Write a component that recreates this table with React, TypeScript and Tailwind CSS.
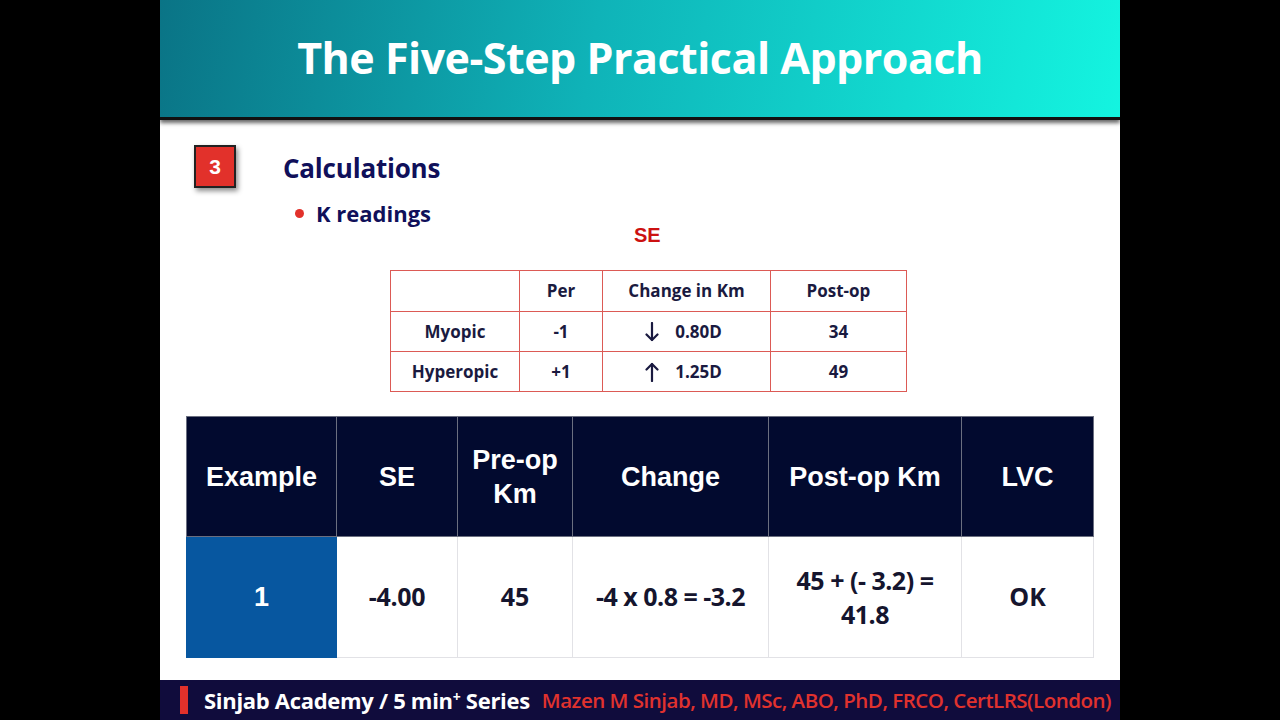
const cal = "font-['Open_Sans','Noto_Sans',sans-serif]";
const ari = "font-['Liberation_Sans',Arial,sans-serif]";

const kRows = [
  { label: "Myopic", per: "-1", up: false, change: "0.80D", post: "34" },
  { label: "Hyperopic", per: "+1", up: true, change: "1.25D", post: "49" },
];

const headers = [
  { text: "Example", w: "w-[150px]" },
  { text: "SE", w: "w-[121px]" },
  { text: "Pre-op Km", w: "w-[115px]" },
  { text: "Change", w: "w-[196px]" },
  { text: "Post-op Km", w: "w-[193px]" },
  { text: "LVC", w: "w-[132px]" },
];

function Arrow({ up }: { up: boolean }) {
  return (
    <svg width="14" height="20" viewBox="0 0 14 20" className={up ? "" : "rotate-180"} fill="none" stroke="#1a1a40" strokeWidth="2.2" strokeLinecap="round" strokeLinejoin="round">
      <path d="M7 19V2" />
      <path d="M1.5 7.5L7 2l5.5 5.5" />
    </svg>
  );
}

export default function App() {
  return (
    <div className="w-full h-[720px] bg-black flex justify-center overflow-hidden">
      <div className="w-[960px] h-full flex flex-col bg-white">
        {/* title bar */}
        <div className="h-[120px] shrink-0 bg-[linear-gradient(100deg,#0a7486_0%,#0fb3b8_45%,#14f4e0_100%)] flex items-center justify-center shadow-[0_3px_4px_rgba(0,0,0,0.6)] border-b-[3px] border-[#111]">
          <h1 className={`${cal} text-white font-bold text-[43px] tracking-[-0.5px]`}>The Five-Step Practical Approach</h1>
        </div>

        <div className="flex-1 flex flex-col">
          {/* heading */}
          <div className="flex items-start pl-[34px] pt-[25px]">
            <div className={`${ari} w-[42px] h-[43px] bg-[#e2312b] border-2 border-[#222] text-white font-bold text-[21px] flex items-center justify-center shadow-[2px_3px_5px_rgba(0,0,0,0.45)]`}>3</div>
            <div className="ml-[47px] pt-[6px]">
              <div className={`${cal} text-[#10105a] font-bold text-[26px] leading-[34px] tracking-[-0.2px]`}>Calculations</div>
              <div className="flex items-center mt-[14px] ml-[12px]">
                <span className="w-[9px] h-[9px] rounded-full bg-[#e2312b]"></span>
                <span className={`${cal} text-[#10105a] font-bold text-[22px] leading-[28px] ml-[12px]`}>K readings</span>
              </div>
            </div>
          </div>

          <div className={`${ari} text-[#cc1111] font-bold text-[20px] leading-[24px] ml-[474px] -mt-[4px]`}>SE</div>

          {/* small table */}
          <div className="ml-[230px] mt-[23px]">
            <table className={`${cal} border-collapse text-[#1a1a40] text-[17px] font-bold`}>
              <tbody>
                <tr className="h-[41px]">
                  <td className="border border-[#dc5a55] w-[129px]"></td>
                  <td className="border border-[#dc5a55] w-[83px] text-center">Per</td>
                  <td className="border border-[#dc5a55] w-[168px] text-center">Change in Km</td>
                  <td className="border border-[#dc5a55] w-[136px] text-center">Post-op</td>
                </tr>
                {kRows.map((r) => (
                  <tr key={r.label} className="h-[40px]">
                    <td className="border border-[#dc5a55] text-center">{r.label}</td>
                    <td className="border border-[#dc5a55] text-center">{r.per}</td>
                    <td className="border border-[#dc5a55]">
                      <div className="flex items-center justify-center gap-[16px] pr-[6px]">
                        <Arrow up={r.up} />
                        <span>{r.change}</span>
                      </div>
                    </td>
                    <td className="border border-[#dc5a55] text-center">{r.post}</td>
                  </tr>
                ))}
              </tbody>
            </table>
          </div>

          {/* example table */}
          <div className="ml-[26px] mt-[24px]">
            <table className="border-collapse">
              <tbody>
                <tr className="h-[120px] bg-[#020a2f]">
                  {headers.map((h) => (
                    <td key={h.text} className={`${h.w} ${ari} border border-[#6b6f80] text-white font-bold text-[27px] leading-[34px] text-center px-1`}>
                      {h.text === "Pre-op Km" ? (<>Pre-op<br />Km</>) : h.text}
                    </td>
                  ))}
                </tr>
                <tr className="h-[121px]">
                  <td className={`${ari} bg-[#0757a0] text-white font-bold text-[27px] text-center border border-[#0757a0]`}>1</td>
                  <td className={`${cal} border border-[#e2e2e6] text-[#15152e] font-bold text-[25px] text-center tracking-[-0.3px]`}>-4.00</td>
                  <td className={`${cal} border border-[#e2e2e6] text-[#15152e] font-bold text-[25px] text-center`}>45</td>
                  <td className={`${cal} border border-[#e2e2e6] text-[#15152e] font-bold text-[25px] text-center tracking-[-0.5px]`}>-4 x 0.8 = -3.2</td>
                  <td className={`${cal} border border-[#e2e2e6] text-[#15152e] font-bold text-[25px] leading-[34px] text-center tracking-[-0.5px]`}>45 + (- 3.2) =<br />41.8</td>
                  <td className={`${cal} border border-[#e2e2e6] text-[#15152e] font-bold text-[25px] text-center`}>OK</td>
                </tr>
              </tbody>
            </table>
          </div>
        </div>

        {/* footer */}
        <div className="h-[40px] shrink-0 bg-[#100c3c] flex items-center pl-[20px]">
          <span className="w-[8px] h-[28px] bg-[#e2312b]"></span>
          <span className={`${cal} text-white font-bold text-[22px] ml-[16px] tracking-[-0.3px] whitespace-nowrap`}>
            Sinjab Academy / 5 min<sup className="text-[14px]">+</sup> Series
          </span>
          <span className={`${cal} text-[#e0322e] font-semibold text-[20.5px] ml-[12px] tracking-[-0.5px] whitespace-nowrap`}>
            Mazen M Sinjab, MD, MSc, ABO, PhD, FRCO, CertLRS(London)
          </span>
        </div>
      </div>
    </div>
  );
}
